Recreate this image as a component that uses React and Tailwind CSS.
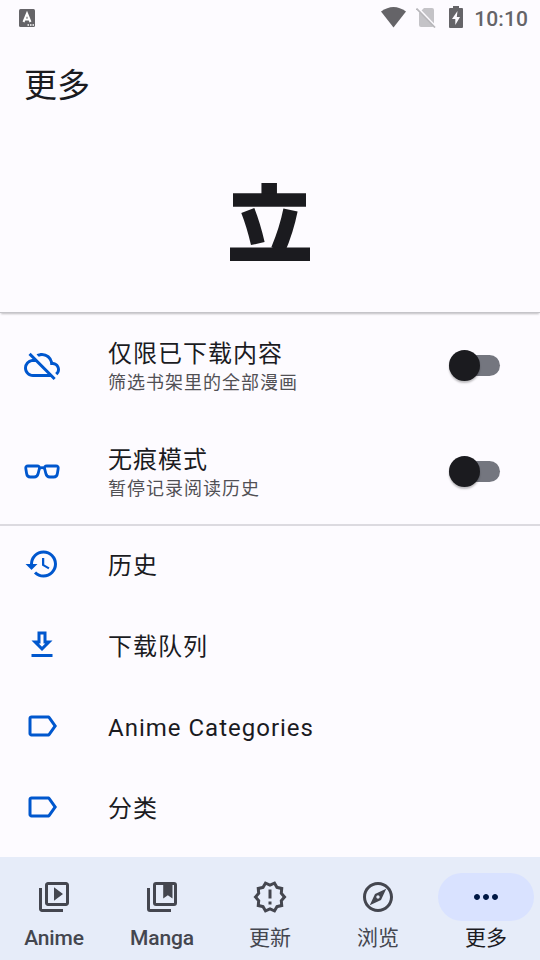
import { useState } from "react";
import {
    MdHistory,
    MdLabelOutline,
    MdMoreHoriz,
    MdOutlineCloudOff,
    MdOutlineExplore,
    MdOutlineNewReleases,
    MdOutlineVideoLibrary,
} from "react-icons/md";

function GlassesIcon({ className }) {
    return (
        <svg viewBox="0 0 36 36" className={className} fill="none" stroke="currentColor" strokeWidth="2.8" strokeLinejoin="round">
            <path d="M4 13h9.200c1.800 0 2.600.9 2.200 2.500l-1.200 4.800c-.6 2.500-1.800 3.700-4 3.700H6.300c-2.300 0-3.400-1.200-3.700-3.500l-.8-5c-.3-1.700.5-2.500 2.200-2.500z" />
            <path d="M32 13h-9.200c-1.800 0-2.600.9-2.200 2.500l1.200 4.800c.6 2.500 1.800 3.700 4 3.700h3.900c2.300 0 3.400-1.200 3.700-3.500l.8-5c.3-1.700-.5-2.500-2.200-2.500z" />
            <path d="M15 15.200q3-1.200 6 0" />
        </svg>
    );
}

function DownloadIcon({ className }) {
    return (
        <svg viewBox="0 0 24 24" className={className} fill="currentColor">
            <path d="M19 9h-4V3H9v6H5l7 7 7-7zm-8 2V5h2v6h1.17L12 13.17 9.83 11H11zM5 18h14v2H5z" />
        </svg>
    );
}

function MangaIcon({ className }) {
    return (
        <svg viewBox="0 0 24 24" className={className} fill="none" stroke="currentColor" strokeWidth="2">
            <path d="M3 6v14q0 1 1 1h14" />
            <rect x="7" y="3" width="14" height="14" rx="1" />
            <path d="M12.800 3h6.200v10l-3.100-2.200-3.100 2.200z" fill="currentColor" stroke="none" />
        </svg>
    );
}

function Logo() {
    return (
        <svg viewBox="0 0 80 79" className="w-20 h-[79px] text-[#1b1b1f]" stroke="currentColor" fill="none">
            <path d="M39.200 0v14" strokeWidth="15.500" />
            <path d="M3 17h73" strokeWidth="13.500" />
            <path d="M17.800 27.500Q23.500 42 27.800 60.500" strokeWidth="14" />
            <path d="M60.500 27Q56.500 47 48 67" strokeWidth="14.500" />
            <path d="M0 71.200h80" strokeWidth="13.500" />
        </svg>
    );
}

function StatusBar() {
    return (
        <div className="h-9 flex items-center justify-between pl-[19px] pr-3 text-[#656468]">
            <svg viewBox="0 0 16 18" className="w-4 h-[18px]">
                <rect width="16" height="18" rx="1.500" fill="currentColor" />
                <path d="M4.500 13L8 4.500 11.500 13M5.800 10.500h4.400" stroke="#fff" strokeWidth="2" fill="none" />
                <path d="M8.500 16h1.500M11 16h1.500M13.500 16h1.500" stroke="#fff" strokeWidth="1.300" />
            </svg>
            <div className="flex items-center">
                <svg viewBox="0 0 26 21" className="w-[26px] h-[21px] mb-px" fill="currentColor">
                    <path d="M0 4.500Q12.500-4.500 25 4.500L12.500 20.500z" />
                </svg>
                <svg viewBox="0 0 20 20" className="w-5 h-5 ml-[9px]">
                    <path d="M8 0h8q2 0 2 2v15q0 2-2 2H5q-2 0-2-2V5z" fill="#c4c3c7" />
                    <path d="M1.500-.5l19 20" stroke="#fdfbff" strokeWidth="2" />
                    <path d="M.5.500l18.500 19" stroke="#b8b7bb" strokeWidth="1.700" />
                </svg>
                <svg viewBox="0 0 14 22" className="w-3.5 h-[22px] ml-[13px] mb-0.5">
                    <path d="M4 0h6v2h3q1 0 1 1v18q0 1-1 1H1q-1 0-1-1V3q0-1 1-1h3z" fill="currentColor" />
                    <path d="M8.500 5L3 13h3.300v6L11 11H7.800z" fill="#fdfbff" />
                </svg>
                <span className="ml-[11px] mt-0.5 text-[21px] leading-none font-medium tracking-[0.1px]">10:10</span>
            </div>
        </div>
    );
}

function Toggle({ checked, onClick }) {
    return (
        <button role="switch" aria-checked={checked} onClick={onClick} className="mb-0.5 w-[51px] h-[21px] rounded-full bg-[#74767f] flex items-center">
            <span className={`size-[31px] shrink-0 rounded-full shadow-[0_2px_2px_rgba(0,0,0,0.25)] ${checked ? "bg-[#0057ce] ml-5" : "bg-[#1b1b1f]"}`} />
        </button>
    );
}

function SwitchRow({ icon: Icon, title, subtitle }) {
    const [checked, setChecked] = useState(false);

    return (
        <div className="h-[106px] flex items-center pl-6 pr-10">
            <Icon className="size-9 mb-0.5 text-[#0057ce]" />
            <div className="flex-1 ml-12 mt-1">
                <p className="text-[24px] leading-[30px] tracking-[1px]">{title}</p>
                <p className="text-[18px] leading-[28px] tracking-[1px] text-[#515055]">{subtitle}</p>
            </div>
            <Toggle checked={checked} onClick={() => setChecked(!checked)} />
        </div>
    );
}

const menu = [
    { icon: MdHistory, title: "历史" },
    { icon: DownloadIcon, title: "下载队列" },
    { icon: MdLabelOutline, title: "Anime Categories" },
    { icon: MdLabelOutline, title: "分类" },
];

const tabs = [
    { icon: MdOutlineVideoLibrary, label: "Anime" },
    { icon: MangaIcon, label: "Manga" },
    { icon: MdOutlineNewReleases, label: "更新" },
    { icon: MdOutlineExplore, label: "浏览" },
    { icon: MdMoreHoriz, label: "更多" },
];

export default function App() {
    const [tab, setTab] = useState("更多");

    return (
        <div className="w-[540px] h-[960px] overflow-hidden flex flex-col bg-[#fdfbff] text-[#1b1b1f] font-[Roboto,'Noto_Sans_CJK_SC',sans-serif]">
            <StatusBar />
            <h1 className="h-24 flex items-center pt-[3px] pl-6 text-[33px] leading-none">更多</h1>

            <div className="h-[181px] shrink-0 flex justify-center pt-[51px] border-b border-[#c5c4c9] shadow-[0_2px_2px_-1px_rgba(0,0,0,0.25)]">
                <Logo />
            </div>

            <div className="flex-1 min-h-0 overflow-hidden">
                <SwitchRow icon={MdOutlineCloudOff} title="仅限已下载内容" subtitle="筛选书架里的全部漫画" />
                <SwitchRow icon={GlassesIcon} title="无痕模式" subtitle="暂停记录阅读历史" />
                <div className="-mt-px h-0.5 bg-[#dcdae0]" />
                {menu.map((item) => (
                    <div key={item.title} className="h-[81px] flex items-center pl-6 pb-[5px]">
                        <item.icon className="size-9 text-[#0057ce]" />
                        <span className="ml-12 mt-1 text-[24px] leading-[30px] tracking-[1px]">{item.title}</span>
                    </div>
                ))}
            </div>

            <nav className="h-[103px] shrink-0 flex bg-[#e6ecf9]">
                {tabs.map((item) => (
                    <button
                        key={item.label}
                        onClick={() => setTab(item.label)}
                        className={`flex-1 flex flex-col items-center pt-4 ${tab === item.label ? "text-[#1b1b1f]" : "text-[#44464f]"}`}
                    >
                        <span className={`w-24 h-12 rounded-full flex items-center justify-center ${tab === item.label ? "bg-[#d9e2ff] text-[#001945]" : ""}`}>
                            <item.icon className="size-9" />
                        </span>
                        <span className={`mt-1 text-[21px] leading-[26px] ${/^[A-Z]/.test(item.label) ? "font-medium -tracking-[0.15px]" : ""}`}>
                            {item.label}
                        </span>
                    </button>
                ))}
            </nav>
        </div>
    );
}
